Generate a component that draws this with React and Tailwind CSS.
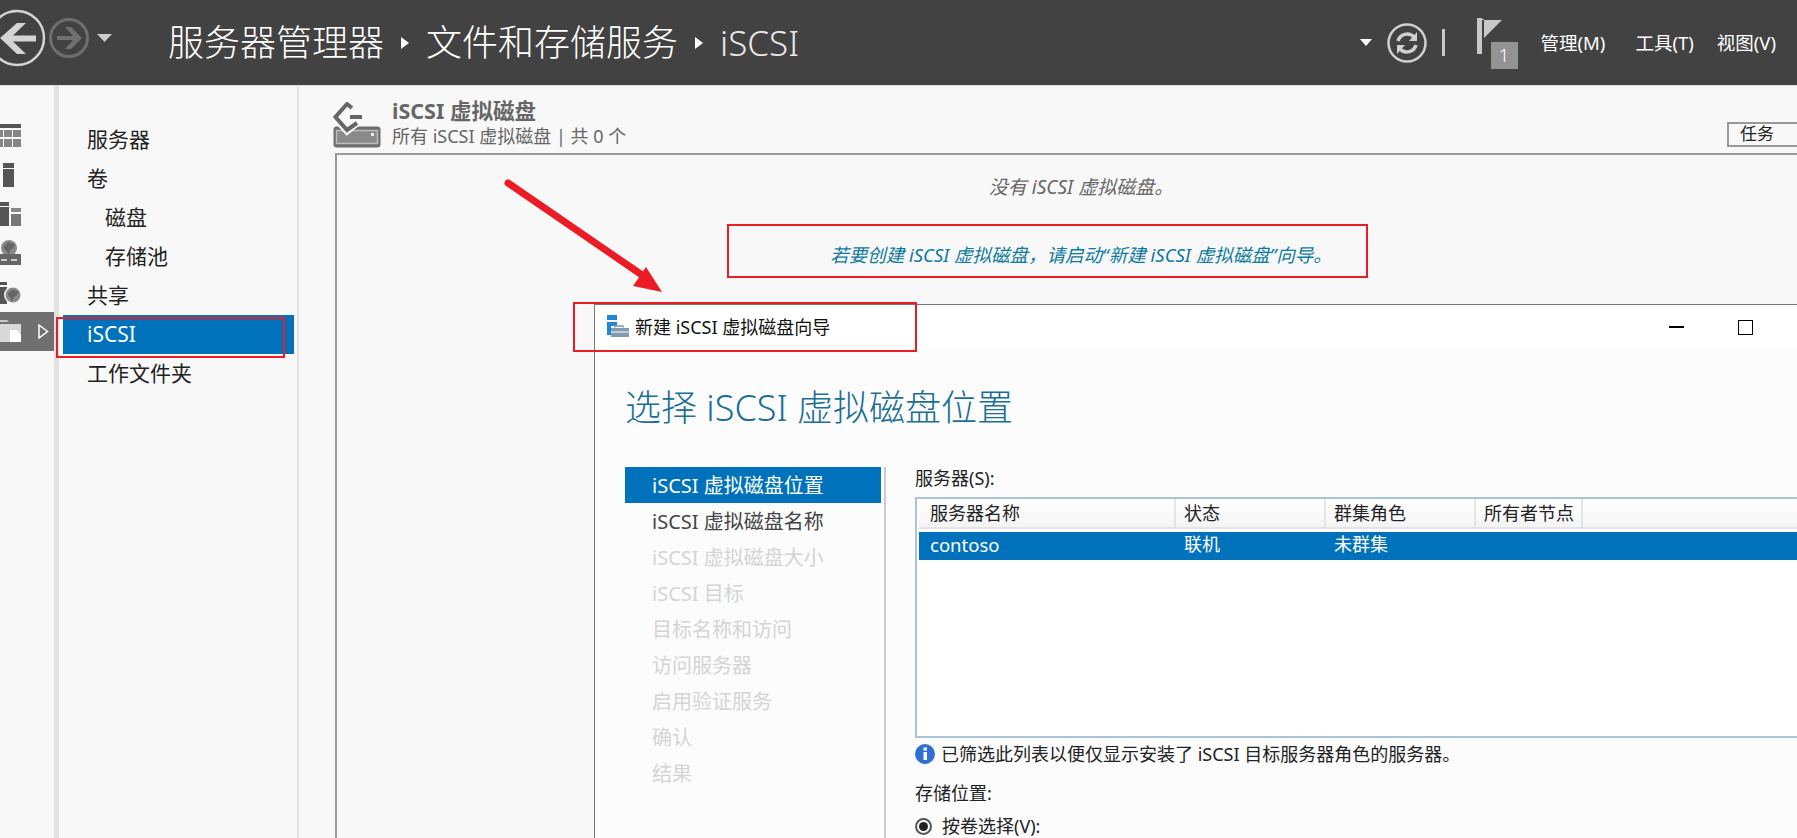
import React from 'react';

const navItems = [
  { label: '服务器' },
  { label: '卷' },
  { label: '磁盘', sub: true },
  { label: '存储池', sub: true },
  { label: '共享' },
  { label: 'iSCSI', active: true },
  { label: '工作文件夹' },
];

const steps = [
  { label: 'iSCSI 虚拟磁盘位置', state: 'active' },
  { label: 'iSCSI 虚拟磁盘名称', state: 'normal' },
  { label: 'iSCSI 虚拟磁盘大小' },
  { label: 'iSCSI 目标' },
  { label: '目标名称和访问' },
  { label: '访问服务器' },
  { label: '启用验证服务' },
  { label: '确认' },
  { label: '结果' },
];

const Caret = ({ className }) => (
  <svg viewBox="0 0 8 12" className={className}>
    <path d="M0 0 L8 6 L0 12 Z" fill="currentColor" />
  </svg>
);

const RailIcon = ({ children }) => (
  <svg width="24" height="27" viewBox="0 0 24 27">
    {children}
  </svg>
);

const Globe = ({ cx, cy, r }) => (
  <>
    <circle cx={cx} cy={cy} r={r} fill="#8a8a8a" />
    <path
      d={`M${cx - r + 2} ${cy - 1} l${r - 3} -${r - 3} ${r - 1} 2 -2 ${r - 3} -3 1 -1 ${r - 3} -2 -3z`}
      fill="#666"
    />
  </>
);

const railIcons = [
  <RailIcon key="all">
    <rect x="0" y="1" width="21" height="4" fill="#555" />
    <path d="M0 7h3v7h-3zM4 7h8v7h-8zM13 7h8v7h-8zM0 16h3v8h-3zM4 16h8v8h-8zM13 16h8v8h-8z" fill="#858585" />
  </RailIcon>,
  <RailIcon key="local">
    <rect x="3" y="1" width="11" height="5" fill="#555" />
    <rect x="3" y="7" width="11" height="18" fill="#555" />
  </RailIcon>,
  <RailIcon key="dash">
    <rect x="0" y="1" width="9" height="4" fill="#555" />
    <rect x="0" y="6" width="9" height="19" fill="#555" />
    <rect x="11" y="7" width="10" height="4" fill="#888" />
    <rect x="11" y="13" width="10" height="12" fill="#777" />
  </RailIcon>,
  <RailIcon key="globe">
    <Globe cx={9} cy={8} r={8} />
    <rect x="0" y="14" width="21" height="11" fill="#666" />
    <path d="M1 20h6M11 20h6" stroke="#ccc" strokeWidth="2" />
  </RailIcon>,
  <RailIcon key="server">
    <rect x="0" y="3" width="7" height="3" fill="#555" />
    <rect x="0" y="8" width="7" height="17" fill="#555" />
    <circle cx="13" cy="16" r="9" fill="#f8f8f8" />
    <Globe cx={13} cy={16} r={7.500} />
  </RailIcon>,
  <RailIcon key="files">
    <path d="M0 2h7l2 2h-9z" fill="#ccc" />
    <path d="M0 6h21v9h-11v9h-10z" fill="#d8d8d8" />
    <path d="M10 12h7l4 4v8h-11z" fill="#fff" />
  </RailIcon>,
];

function App() {
  return (
    <div className="relative h-[838px] w-[1797px] overflow-hidden bg-[#f8f8f8] font-['Noto_Sans','Noto_Sans_CJK_SC',sans-serif] text-[#222]">
      {/* Top bar */}
      <header className="flex h-[86px] items-center border-b border-[#dcdcdc] bg-[#424242] text-white">
        <svg width="120" height="85" viewBox="0 0 120 85" className="shrink-0">
          <circle cx="17" cy="38" r="27" fill="none" stroke="#d4d4d4" strokeWidth="2.500" />
          <path d="M0 38 L17 23 H26 L13 35.500 H36 V41.500 H13 L26 54 H17 Z" fill="#d4d4d4" />
          <circle cx="69" cy="38" r="18.500" fill="none" stroke="#6e6e6e" strokeWidth="3" />
          <path d="M82 38 L71 27 H65 L73 36 H57 V40 H73 L65 49 H71 Z" fill="#707070" />
          <path d="M97 34h15l-7.500 8z" fill="#ccc" />
        </svg>
        <div className="ml-[48px] flex items-center text-[36px] leading-none font-light">
          <span>服务器管理器</span>
          <Caret className="mx-[17px] h-[12px] w-[8px] text-white" />
          <span>文件和存储服务</span>
          <Caret className="mx-[17px] h-[12px] w-[8px] text-white" />
          <span className="text-[35px] text-[#e8e8e8]">iSCSI</span>
        </div>
        <div className="ml-auto flex items-center">
          <svg width="12" height="8" viewBox="0 0 12 8" className="mr-[15px]">
            <path d="M0 0h12l-6 7z" fill="#fff" />
          </svg>
          <svg width="40" height="40" viewBox="0 0 40 40">
            <circle cx="20" cy="20" r="18.500" fill="none" stroke="#d0d0d0" strokeWidth="2.500" />
            <path d="M11 18 a9.500 9.500 0 0 1 16 -4 M29 22 a9.500 9.500 0 0 1 -16 4" fill="none" stroke="#d0d0d0" strokeWidth="3.500" />
            <path d="M30 9v9h-8zM10 31v-9h8z" fill="#d0d0d0" />
          </svg>
          <div className="ml-[15px] h-[27px] w-[3px] bg-[#c8c8c8]" />
          <div className="relative ml-[32px] h-[50px] w-[42px] self-start">
            <svg width="26" height="37" viewBox="0 0 26 37" className="absolute left-0 top-0">
              <rect x="0" y="0" width="5" height="36" fill="#c8c8c8" />
              <path d="M5 1h2v1h-2zM7 2h18l-18 18z" fill="#c8c8c8" />
            </svg>
            <div className="absolute left-[14px] top-[24px] flex h-[27px] w-[27px] items-center justify-center bg-[#939393] text-[19px] leading-none font-light text-white">
              1
            </div>
          </div>
          <nav className="ml-[22px] flex items-center pr-[21px] text-[18.500px]">
            <span>管理(M)</span>
            <span className="ml-[30px]">工具(T)</span>
            <span className="ml-[23px]">视图(V)</span>
          </nav>
        </div>
      </header>

      <div className="flex h-[752px]">
        {/* Icon rail */}
        <aside className="flex w-[59px] shrink-0 flex-col border-r-[5px] border-[#e2e2e2] pt-[31px]">
          {railIcons.map((icon, i) => (
            <div
              key={i}
              className={`flex h-[39px] items-center ${i === 5 ? 'bg-[#707070]' : ''}`}
            >
              {icon}
              {i === 5 && (
                <svg width="11" height="15" viewBox="0 0 11 15" className="ml-[14px]">
                  <path d="M1 1 L9.500 7.500 L1 14 Z" fill="none" stroke="#fff" strokeWidth="1.500" />
                </svg>
              )}
            </div>
          ))}
        </aside>

        {/* Nav panel */}
        <aside className="w-[240px] shrink-0 border-r-2 border-[#e2e2e2] pt-[34px] pl-[4px] pr-[3px]">
          {navItems.map((item) => (
            <div
              key={item.label}
              className={`flex h-[39px] items-center text-[21px] ${item.sub ? 'pl-[42px]' : 'pl-[24px]'} ${
                item.active ? 'bg-[#0072bc] text-white' : ''
              }`}
            >
              {item.label}
            </div>
          ))}
        </aside>

        {/* Main */}
        <main className="flex min-w-0 flex-1 flex-col pt-[17px]">
          <div className="flex h-[50px] pl-[34px]">
            <svg width="48" height="46" viewBox="0 0 48 46" className="mt-[-1px] shrink-0">
              <rect x="0.500" y="24.500" width="47" height="21" rx="3" fill="#6e6e6e" />
              <rect x="3.500" y="28.500" width="41" height="13" fill="#8a8a8a" stroke="#bdbdbd" strokeWidth="1.500" />
              <rect x="38" y="31" width="3" height="3" fill="#eee" />
              <path d="M19 6 L14 1 L1.500 15 L14 29 L24 21" fill="none" stroke="#f8f8f8" strokeWidth="7" />
              <path d="M19 6 L14 2 L2.500 15 L14 28 L24 21" fill="none" stroke="#666" strokeWidth="4" />
              <rect x="17" y="13" width="12" height="4" fill="#666" />
            </svg>
            <div className="ml-[11px] flex flex-col leading-none">
              <span className="mt-[-4px] text-[21.500px] leading-[24px] font-bold text-[#666]">iSCSI 虚拟磁盘</span>
              <span className="mt-[1px] text-[18px] leading-[24px] text-[#666]">所有 iSCSI 虚拟磁盘 | 共 0 个</span>
            </div>
            <div className="ml-auto mt-[19px] h-[25px] w-[70px] border-2 border-r-0 border-[#999] pl-[11px] text-[17px] leading-[20px]">
              任务
            </div>
          </div>
          <section className="ml-[36px] flex-1 border-t-2 border-l-2 border-[#999] pl-[21px] text-center italic">
            <p className="mt-[20px] pl-[7px] text-[19px] leading-[24px] text-[#666]">没有 iSCSI 虚拟磁盘。</p>
            <p className="mt-[44px] pl-[7px] text-[18.500px] leading-[24px] text-[#0d7a9f]">
              若要创建 iSCSI 虚拟磁盘，请启动“新建 iSCSI 虚拟磁盘”向导。
            </p>
          </section>
        </main>
      </div>

      {/* Wizard window */}
      <div className="absolute top-[304px] right-0 bottom-0 left-[594px] flex flex-col border-t border-l border-[#777] bg-[#fcfcfc]">
        <div className="flex h-[44px] shrink-0 items-center bg-white pl-[12px]">
          <svg width="22" height="22" viewBox="0 0 22 22" className="mb-[2px] shrink-0">
            <rect x="0" y="0" width="10" height="5" fill="#1f86d8" />
            <path d="M0 7h10v4H4v9H0z" fill="#1f86d8" />
            <path d="M8 12.500V11h8v1.500" fill="none" stroke="#7f9cb0" strokeWidth="1.500" />
            <path d="M4 13h18v3.500H4zM4 17.500h18V22H4z" fill="#7f9cb0" />
          </svg>
          <span className="ml-[6px] text-[18px] leading-none text-[#111]">新建 iSCSI 虚拟磁盘向导</span>
          <div className="ml-auto flex items-center gap-[54px] pr-[44px]">
            <div className="h-[1.500px] w-[15px] bg-black" />
            <div className="h-[15px] w-[15px] border-[1.500px] border-black" />
          </div>
        </div>
        <h1 className="mt-[35px] pl-[30px] text-[36px] leading-[48px] font-light text-[#1a6f96]">选择 iSCSI 虚拟磁盘位置</h1>
        <div className="mt-[35px] flex min-h-0 flex-1">
          <ul className="ml-[30px] w-[261px] shrink-0 border-r-2 border-[#ccc] pr-[3px] text-[20px]">
            {steps.map((step) => (
              <li
                key={step.label}
                className={`flex h-[36px] items-center pt-[1px] pl-[27px] ${
                  step.state === 'active'
                    ? 'bg-[#0072bc] text-white'
                    : step.state === 'normal'
                      ? 'text-[#444]'
                      : 'text-[#d4d4d4]'
                }`}
              >
                {step.label}
              </li>
            ))}
          </ul>
          <div className="flex min-w-0 flex-1 flex-col pl-[29px] text-[18px]">
            <label className="h-[30px] leading-[22px]">服务器(S):</label>
            <div className="h-[242px] border-2 border-r-0 border-[#a9c3d9] bg-white pl-[2px]">
              <div className="flex h-[30px] items-center border-b-2 border-[#e4e4e4] bg-gradient-to-b from-white to-[#f4f4f4]">
                <div className="h-full w-[257px] border-r-2 border-[#e4e4e4] pl-[11px] leading-[28px]">服务器名称</div>
                <div className="h-full w-[150px] border-r-2 border-[#e4e4e4] pl-[8px] leading-[28px]">状态</div>
                <div className="h-full w-[150px] border-r-2 border-[#e4e4e4] pl-[8px] leading-[28px]">群集角色</div>
                <div className="h-full w-[107px] border-r-2 border-[#e4e4e4] pl-[8px] leading-[28px]">所有者节点</div>
              </div>
              <div className="mt-[3px] flex h-[28px] items-center bg-[#0072bc] pb-[2px] text-white">
                <div className="w-[257px] pl-[11px] text-[18.500px]">contoso</div>
                <div className="w-[150px] pl-[8px]">联机</div>
                <div className="w-[150px] pl-[8px]">未群集</div>
              </div>
            </div>
            <div className="mt-[3px] flex h-[26px] items-center">
              <svg width="20" height="20" viewBox="0 0 20 20" className="shrink-0">
                <circle cx="10" cy="10" r="10" fill="#2f6fd0" />
                <rect x="8.500" y="8" width="3.500" height="8" fill="#fff" />
                <rect x="8.500" y="3.500" width="3.500" height="3" fill="#fff" />
              </svg>
              <span className="ml-[6px]">已筛选此列表以便仅显示安装了 iSCSI 目标服务器角色的服务器。</span>
            </div>
            <div className="mt-[14px] h-[24px] leading-[24px]">存储位置:</div>
            <div className="mt-[9px] flex h-[24px] items-center">
              <span className="flex h-[17px] w-[17px] items-center justify-center rounded-full border-2 border-[#555]">
                <span className="h-[9px] w-[9px] rounded-full bg-[#222]" />
              </span>
              <span className="ml-[10px]">按卷选择(V):</span>
            </div>
          </div>
        </div>
      </div>

      {/* Red annotations */}
      <div className="absolute top-[317px] left-[56px] h-[41px] w-[229px] border-2 border-[#ed1c24]" />
      <div className="absolute top-[224px] left-[727px] h-[54px] w-[641px] border-2 border-[#ed1c24]" />
      <div className="absolute top-[302px] left-[573px] h-[50px] w-[344px] border-2 border-[#ed1c24]" />
      <svg width="200" height="130" viewBox="0 0 200 130" className="absolute top-[175px] left-[490px]">
        <path d="M18 8 L152 100" stroke="#ed1c24" strokeWidth="7" strokeLinecap="round" />
        <path d="M172 117 L143 111 L156 92 Z" fill="#ed1c24" />
      </svg>
    </div>
  );
}

export default App;
